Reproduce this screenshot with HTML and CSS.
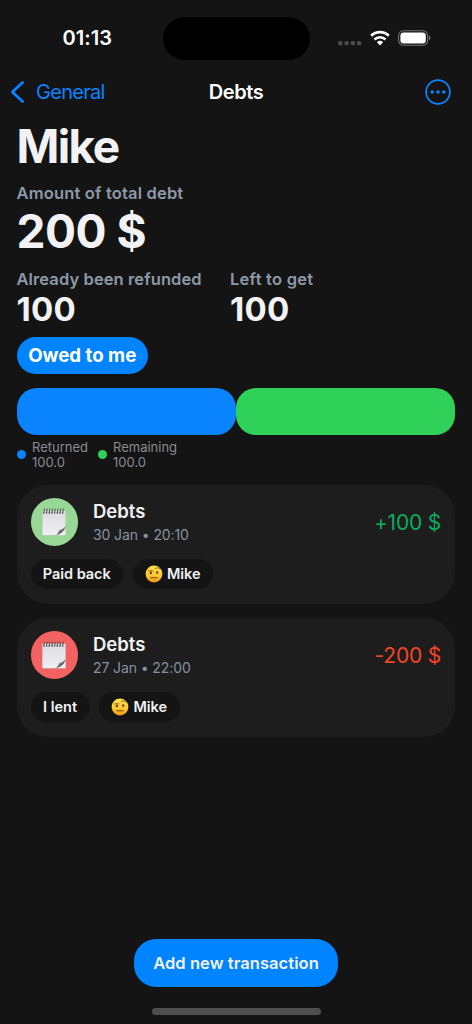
FILE: index.html
```html
<!DOCTYPE html>
<html lang="en">
<head>
<meta charset="utf-8">
<title>Debts</title>
<link rel="stylesheet" href="styles.css">
</head>
<body>
<svg width="0" height="0" class="defs" aria-hidden="true">
  <defs>
    <linearGradient id="paper" x1="0" y1="0" x2="0" y2="1"><stop offset="0" stop-color="#dcdce0"/><stop offset="1" stop-color="#f0f0f3"/></linearGradient>
    <linearGradient id="curl" x1="0" y1="0" x2="1" y2="1"><stop offset=".1" stop-color="#ffffff"/><stop offset=".4" stop-color="#b9babd"/><stop offset=".62" stop-color="#55575a"/></linearGradient>
    <linearGradient id="skin" x1="0" y1="0" x2="0" y2="1"><stop offset="0" stop-color="#ffdf4b"/><stop offset=".55" stop-color="#ffc933"/><stop offset="1" stop-color="#f59a17"/></linearGradient>
    <symbol id="notepad" viewBox="0 0 26 28">
      <path d="M1 3h24v25H1z" fill="#000" opacity=".12"/>
      <path d="M1.3 2.6h23.4v24.8H1.3z" fill="url(#paper)"/>
      <path d="M13 27.3c4-.4 4.4-3 5-5.6 2.2.2 5-1 6.7-4-.3 4.4-5.8 9.6-11.7 9.6z" fill="url(#curl)"/>
      <path d="M2.4 5.1h21.2" stroke="#87888c" stroke-width="2" stroke-dasharray="1.3 1.35"/>
      <path d="M2.6 5.3l1-4.6M5.3 5.3l1-4.6M8 5.3l1-4.6M10.7 5.3l1-4.6M13.4 5.3l1-4.6M16.1 5.3l1-4.6M18.8 5.3l1-4.6M21.5 5.3l1-4.6" stroke="#4a4b4f" stroke-width="1"/>
    </symbol>
    <symbol id="raised-brow" viewBox="0 0 18 18">
      <circle cx="9" cy="9" r="8.4" fill="url(#skin)"/>
      <ellipse cx="5.8" cy="7.9" rx="1.1" ry="1.3" fill="#5d3512"/>
      <ellipse cx="12.2" cy="7.5" rx="1.1" ry="1.3" fill="#5d3512"/>
      <path d="M3.5 6c1.6-.6 3-.5 4.4 0M10.3 3.6c1.5-1.3 3.1-1 4.4.2" fill="none" stroke="#7b4613" stroke-width=".8" stroke-linecap="round"/>
      <path d="M5.8 12.8h6.4" stroke="#65390f" stroke-width=".9" stroke-linecap="round"/>
    </symbol>
  </defs>
</svg>
<div class="screen">
  <header class="status">
    <span class="time">01:13</span>
    <span class="island"></span>
    <span class="indicators">
      <svg class="cellular" width="24" height="6" viewBox="0 0 24 6" fill="#4d4d4d"><rect x=".2" y="1" width="4.2" height="4.2" rx="1.5"/><rect x="6.5" y="1" width="4.2" height="4.2" rx="1.5"/><rect x="12.8" y="1" width="4.2" height="4.2" rx="1.5"/><rect x="19" y="1" width="4.2" height="4.2" rx="1.5"/></svg>
      <svg class="wifi" width="20" height="16" viewBox="0 0 20 16"><g fill="none" stroke="#fff" stroke-width="2.7"><path d="M1.2 5.7a12.6 12.6 0 0 1 17.6 0"/><path d="M4.5 9.5a7.9 7.9 0 0 1 11 0"/></g><path d="M6.9 12.2a4.5 4.5 0 0 1 6.2 0L10 15.4z" fill="#fff"/></svg>
      <svg class="battery" width="33" height="16" viewBox="0 0 33 16"><rect x=".6" y=".7" width="29" height="14.5" rx="4.7" fill="none" stroke="#727272" stroke-width="1.1"/><rect x="2.4" y="2.5" width="25.4" height="10.9" rx="3.2" fill="#fff"/><path d="M31 5.6c1.8.7 1.8 4 0 4.7z" fill="#777"/></svg>
    </span>
  </header>
  <nav class="nav">
    <a class="back"><svg width="15" height="24" viewBox="0 0 15 24"><path d="M12.6 2.5L2.3 12l10.3 9.6" fill="none" stroke="#0a84ff" stroke-width="2.7" stroke-linecap="round" stroke-linejoin="round"/></svg><span class="back-text">General</span></a>
    <span class="nav-title">Debts</span>
    <span class="more"><svg width="26" height="26" viewBox="0 0 26 26"><circle cx="13" cy="13" r="11.9" fill="none" stroke="#0a84ff" stroke-width="1.7"/><g fill="#0a84ff"><circle cx="7.2" cy="13" r="1.8"/><circle cx="13" cy="13" r="1.8"/><circle cx="18.8" cy="13" r="1.8"/></g></svg></span>
  </nav>
  <main class="content">
    <h1 class="name">Mike</h1>
    <div class="label total-label">Amount of total debt</div>
    <div class="total">200 $</div>
    <div class="split">
      <div><div class="label">Already been refunded</div><div class="figure">100</div></div>
      <div><div class="label left-get">Left to get</div><div class="figure">100</div></div>
    </div>
    <div class="owed"><span>Owed to me</span></div>
    <div class="bar"><i class="blue"></i><i class="green"></i></div>
    <div class="legend">
      <div class="entry"><i class="dot blue"></i><div>Returned<br>100.0</div></div>
      <div class="entry"><i class="dot green"></i><div>Remaining<br>100.0</div></div>
    </div>
    <section class="card">
      <div class="card-top">
        <span class="avatar paid"><svg width="26" height="28"><use href="#notepad"/></svg></span>
        <div class="info"><div class="title">Debts</div><div class="date">30 Jan • 20:10</div></div>
        <span class="amount plus">+100 $</span>
      </div>
      <div class="chips"><span class="chip paid-chip">Paid back</span><span class="chip person"><svg width="18" height="18"><use href="#raised-brow"/></svg>Mike</span></div>
    </section>
    <section class="card">
      <div class="card-top">
        <span class="avatar lent"><svg width="26" height="28"><use href="#notepad"/></svg></span>
        <div class="info"><div class="title">Debts</div><div class="date">27 Jan • 22:00</div></div>
        <span class="amount minus">-200 $</span>
      </div>
      <div class="chips"><span class="chip lent-chip">I lent</span><span class="chip person"><svg width="18" height="18"><use href="#raised-brow"/></svg>Mike</span></div>
    </section>
  </main>
  <footer class="footer">
    <button class="add"><span>Add new transaction</span></button>
    <div class="home"></div>
  </footer>
</div>
</body>
</html>
```
FILE: styles.css
```css
* { box-sizing: border-box; }
body { margin: 0; background: #141414; color: #f2f2f5; font-family: Inter, "Noto Sans", sans-serif; white-space: nowrap; }
svg { display: block; flex: none; }
.defs { position: absolute; }
.screen { width: 472px; height: 1024px; display: flex; flex-direction: column; }
.status { height: 76px; display: grid; grid-template-columns: 162.5px 147px 1fr; align-items: center; color: #fff; }
.time { padding-left: 62.5px; font-size: 20px; font-weight: 600; letter-spacing: .05px; }
.island { height: 43px; border-radius: 22px; background: #000; }
.indicators { display: flex; align-items: center; padding-left: 28.5px; }
.cellular { margin-top: 10px; }
.wifi { margin-left: 8px; }
.battery { margin-left: 8px; }
.nav { height: 32px; display: grid; grid-template-columns: 1fr auto 1fr; align-items: center; }
.back { display: flex; align-items: center; padding-left: 9.5px; gap: 11.5px; color: #0a84ff; font-size: 20px; letter-spacing: -.7px; }
.nav-title { font-size: 20px; font-weight: 600; color: #fff; letter-spacing: -.4px; }
.more { justify-self: end; margin-right: 21px; }
.content { padding: 16px 17px 0 16.5px; }
.name { margin: 0; height: 44px; line-height: 44px; font-size: 46px; font-weight: 700; letter-spacing: -1.6px; }
.label { font-size: 16.5px; font-weight: 600; line-height: 22px; color: #8e99a8; letter-spacing: .1px; }
.left-get { letter-spacing: .25px; }
.total-label { margin-top: 14px; letter-spacing: .17px; }
.total { font-size: 46px; font-weight: 700; line-height: 50px; margin-top: 2px; letter-spacing: -.5px; }
.split { display: grid; grid-template-columns: 213.5px 1fr; margin-top: 11.5px; }
.figure { font-size: 33px; font-weight: 700; line-height: 34px; margin-top: 2px; letter-spacing: .2px; }
.owed { width: 131.5px; height: 36.5px; margin-top: 11.5px; border-radius: 19px; background: #0084ff; display: flex; align-items: center; justify-content: center; font-size: 18.7px; font-weight: 700; color: #fff; }
.bar { display: grid; grid-template-columns: 1fr 1fr; height: 47px; margin-top: 14px; }
.bar i { border-radius: 20px; }
.blue { background: #0a84ff; }
.green { background: #30d158; }
.legend { display: flex; gap: 9.5px; height: 30px; margin-top: 5px; font-size: 13px; line-height: 15px; color: #8a8a90; }
.entry { display: flex; align-items: center; gap: 6px; }
.dot { width: 9.5px; height: 9.5px; border-radius: 50%; }
.card { height: 119px; margin-top: 14px; padding: 13.5px 14px; background: #1d1d1e; border-radius: 31px; }
.legend + .card { margin-top: 15px; }
.card-top { display: flex; align-items: center; height: 47.5px; }
.avatar { width: 47.5px; height: 47.5px; border-radius: 50%; display: grid; place-items: center; }
.paid { background: #98d796; }
.lent { background: #f26262; }
.info { margin-left: 15px; flex: 1; }
.title { font-size: 18.5px; line-height: 24px; font-weight: 600; }
.date { font-size: 14px; line-height: 20px; margin-top: 2.5px; color: #8791a0; letter-spacing: -.1px; }
.amount { font-size: 21px; letter-spacing: -.2px; margin-top: 2px; }
.plus { color: #0bac5b; }
.minus { color: #f44424; }
.chips { display: flex; gap: 9.5px; margin-top: 13px; }
.chip { height: 30.5px; border-radius: 16px; background: #141414; display: flex; align-items: center; justify-content: center; font-size: 14.5px; font-weight: 600; }
.paid-chip { width: 92.5px; letter-spacing: -.05px; }
.lent-chip { width: 59px; }
.person { width: 80.5px; gap: 4px; }
.footer { margin-top: auto; height: 85px; display: flex; flex-direction: column; align-items: center; }
.add { width: 204px; height: 48px; border: 0; padding: 0; border-radius: 22px; background: #0084ff; color: #f2f2f5; font: 600 16.5px/48px Inter, sans-serif; letter-spacing: .07px; }
.home { width: 169px; height: 6.5px; margin-top: 21px; border-radius: 4px; background: #4e4e4e; }
```
